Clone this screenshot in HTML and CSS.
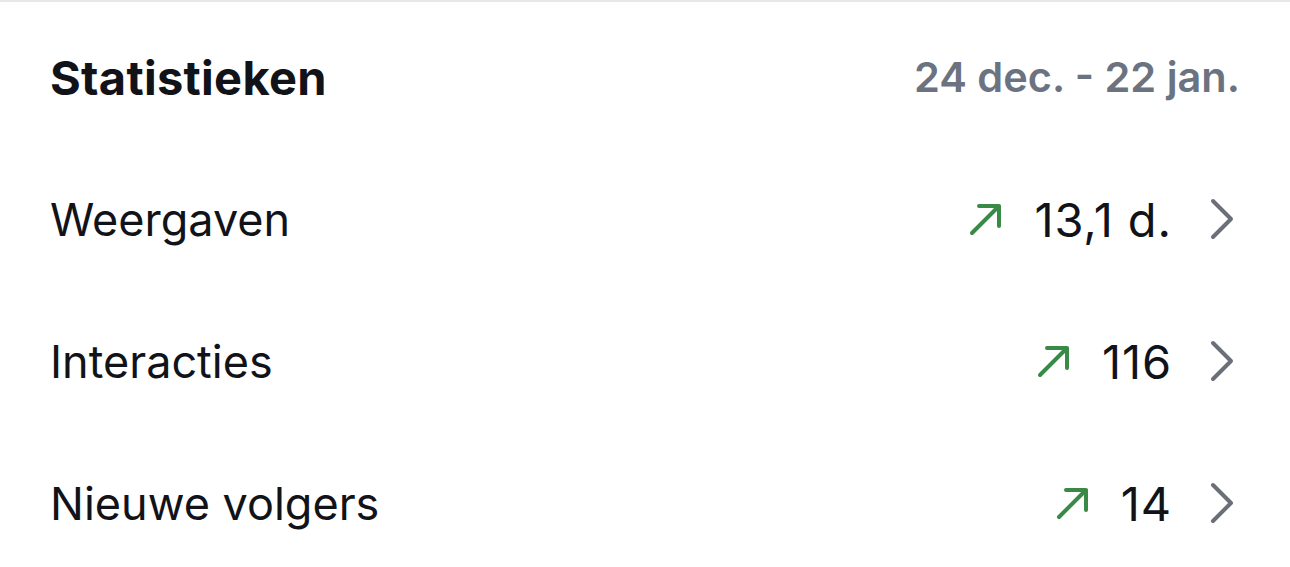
FILE: index.html
```html
<!DOCTYPE html>
<html lang="nl">
<head>
<meta charset="utf-8">
<link rel="stylesheet" href="styles.css">
</head>
<body>
<section class="stats">
  <header class="stats-head">
    <h2 class="stats-title">Statistieken</h2>
    <span class="stats-range">24 dec. - 22 jan.</span>
  </header>
  <ul class="stats-list">
    <li class="stat-row">
      <span class="stat-label">Weergaven</span>
      <span class="stat-right">
        <svg class="trend" viewBox="0 0 34 34"><path d="M4 31 L31 4 M11 4 H31 V24"/></svg>
        <span class="stat-value">13,1 d.</span>
        <svg class="chev" viewBox="0 0 24 42"><path d="M3 3 L21 21 L3 39"/></svg>
      </span>
    </li>
    <li class="stat-row">
      <span class="stat-label">Interacties</span>
      <span class="stat-right">
        <svg class="trend" viewBox="0 0 34 34"><path d="M4 31 L31 4 M11 4 H31 V24"/></svg>
        <span class="stat-value">116</span>
        <svg class="chev" viewBox="0 0 24 42"><path d="M3 3 L21 21 L3 39"/></svg>
      </span>
    </li>
    <li class="stat-row">
      <span class="stat-label">Nieuwe volgers</span>
      <span class="stat-right">
        <svg class="trend" viewBox="0 0 34 34"><path d="M4 31 L31 4 M11 4 H31 V24"/></svg>
        <span class="stat-value">14</span>
        <svg class="chev" viewBox="0 0 24 42"><path d="M3 3 L21 21 L3 39"/></svg>
      </span>
    </li>
  </ul>
</section>
</body>
</html>
```
FILE: styles.css
```css
html, body {
  margin: 0;
  padding: 0;
  background: #ffffff;
}
body {
  font-family: Inter, "Noto Sans", sans-serif;
  color: #111318;
}
.stats {
  border-top: 2px solid #e5e7eb;
  padding: 0 50px 0 50px;
}
.stats-head {
  display: flex;
  justify-content: space-between;
  align-items: center;
  height: 142px;
  padding-top: 4px;
}
.stats-title {
  margin: 0;
  font-size: 47px;
  font-weight: 700;
  letter-spacing: 0.3px;
}
.stats-range {
  font-size: 41.5px;
  font-weight: 600;
  color: #6b7280;
}
.stats-list {
  list-style: none;
  margin: 0;
  padding: 0;
}
.stat-row {
  display: flex;
  justify-content: space-between;
  align-items: center;
  height: 142px;
}
.stat-label {
  font-size: 45px;
}
.stat-right {
  display: flex;
  align-items: center;
}
.stat-value {
  font-size: 47px;
  letter-spacing: 0.9px;
  margin-left: 32px;
}
.trend {
  width: 34px;
  height: 34px;
  fill: none;
  stroke: #3a8a47;
  stroke-width: 4;
  stroke-linecap: round;
  stroke-linejoin: round;
}
.chev {
  width: 24px;
  height: 42px;
  margin-left: 38px;
  margin-right: 6px;
  fill: none;
  stroke: #6b7078;
  stroke-width: 4;
  stroke-linecap: round;
  stroke-linejoin: round;
}
```
